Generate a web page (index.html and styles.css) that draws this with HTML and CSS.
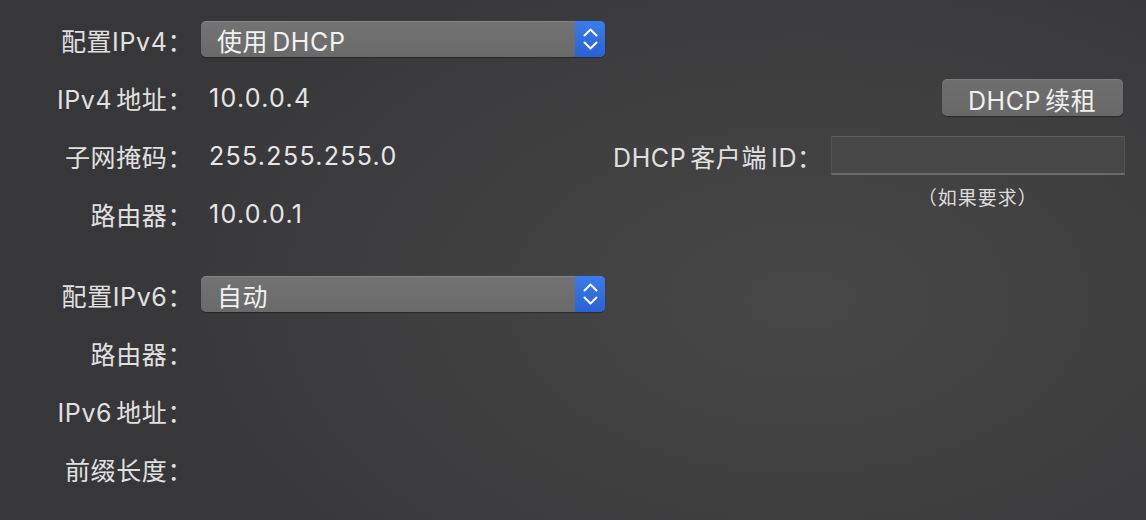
FILE: index.html
```html
<!DOCTYPE html>
<html lang="zh-CN">
<head>
<meta charset="utf-8">
<title>网络配置</title>
<link rel="stylesheet" href="styles.css">
</head>
<body>
<div class="page">
  <section class="grid grid-v4">
    <div class="label">配置IPv4：</div>
    <div class="popup">
      <span class="popup-text">使用<span class="lat-l">DHCP</span></span>
      <span class="popup-arrows">
        <svg width="15" height="22" viewBox="0 0 15 22"><path d="M1.5 7.5 L7.5 1.5 L13.5 7.5 M1.5 14.5 L7.5 20.5 L13.5 14.5" fill="none" stroke="#fff" stroke-width="2" stroke-linecap="round" stroke-linejoin="round"/></svg>
      </span>
    </div>
    <div></div>
    <div></div>

    <div class="label"><span class="lat">IPv4</span>地址：</div>
    <div class="value">10.0.0.4</div>
    <div></div>
    <div class="btn-cell"><button class="btn"><span class="lat">DHCP</span>续租</button></div>

    <div class="label">子网掩码：</div>
    <div class="value">255.255.255.0</div>
    <div class="label"><span class="lat">DHCP</span>客户端<span class="lat-l">ID</span>：</div>
    <div class="field"></div>

    <div class="label">路由器：</div>
    <div class="value">10.0.0.1</div>
    <div></div>
    <div class="hint">（如果要求）</div>
  </section>

  <section class="grid grid-v6">
    <div class="label">配置IPv6：</div>
    <div class="popup">
      <span class="popup-text">自动</span>
      <span class="popup-arrows">
        <svg width="15" height="22" viewBox="0 0 15 22"><path d="M1.5 7.5 L7.5 1.5 L13.5 7.5 M1.5 14.5 L7.5 20.5 L13.5 14.5" fill="none" stroke="#fff" stroke-width="2" stroke-linecap="round" stroke-linejoin="round"/></svg>
      </span>
    </div>
    <div></div>
    <div></div>

    <div class="label">路由器：</div>
    <div class="value"></div>
    <div></div>
    <div></div>

    <div class="label"><span class="lat">IPv6</span>地址：</div>
    <div class="value"></div>
    <div></div>
    <div></div>

    <div class="label">前缀长度：</div>
    <div class="value"></div>
    <div></div>
    <div></div>
  </section>
</div>
</body>
</html>
```

FILE: styles.css
```css
html, body {
  margin: 0;
  padding: 0;
  height: 100%;
}

body {
  background: radial-gradient(ellipse 700px 420px at 800px 300px, #474747 0%, #404041 45%, #37373a 100%);
  background-color: #38383a;
  font-family: "Inter", "Noto Sans CJK SC", sans-serif;
  font-size: 25px;
  letter-spacing: 0.6px;
  color: #e4e4e4;
  overflow: hidden;
}

.page {
  width: 1146px;
  height: 520px;
  padding-top: 10px;
  box-sizing: border-box;
  display: flex;
  flex-direction: column;
  gap: 23px;
}

.grid {
  display: grid;
  grid-template-columns: 193px 404px 1fr 294px;
  grid-auto-rows: 58px;
  column-gap: 8px;
  padding-right: 23px;
  align-items: center;
}

.lat {
  margin-right: 4px;
}

.lat-l {
  margin-left: 4px;
}

.label {
  text-align: right;
  white-space: nowrap;
  color: #e0e0e0;
  padding-top: 2px;
}

.value {
  padding-left: 8px;
  padding-top: 2px;
  letter-spacing: 1.3px;
  color: #e6e6e6;
}

.popup {
  height: 36px;
  border-radius: 5px;
  background: linear-gradient(#737373, #6a6a6a);
  box-shadow: 0 1px 1px rgba(0, 0, 0, 0.35), inset 0 1px 0 rgba(255, 255, 255, 0.12);
  display: flex;
  align-items: center;
  overflow: hidden;
}

.popup-text {
  flex: 1;
  padding-left: 16px;
  padding-top: 2px;
  color: #f2f2f2;
}

.popup-arrows {
  width: 30px;
  height: 100%;
  background: linear-gradient(#3a7cec, #2a62d6);
  display: flex;
  align-items: center;
  justify-content: center;
}

.popup-arrows svg {
  display: block;
}

.btn-cell {
  display: flex;
  justify-content: flex-end;
  padding-right: 2px;
}

.btn {
  width: 181px;
  height: 37px;
  border: none;
  border-radius: 5px;
  background: linear-gradient(#6e6e6e, #686868);
  box-shadow: 0 1px 1px rgba(0, 0, 0, 0.35), inset 0 1px 0 rgba(255, 255, 255, 0.1);
  color: #efefef;
  font-family: inherit;
  font-size: 25px;
  letter-spacing: 0.6px;
  padding: 2px 0 0;
}

.field {
  height: 39px;
  box-sizing: border-box;
  background: #474747;
  border-top: 1px solid #5c5c5c;
  border-left: 1px solid #535353;
  border-right: 1px solid #535353;
  border-bottom: 2px solid #6a6a6a;
}

.hint {
  align-self: start;
  text-align: center;
  font-size: 19px;
  letter-spacing: 1px;
  color: #dcdcdc;
  margin-top: -1px;
}
```
